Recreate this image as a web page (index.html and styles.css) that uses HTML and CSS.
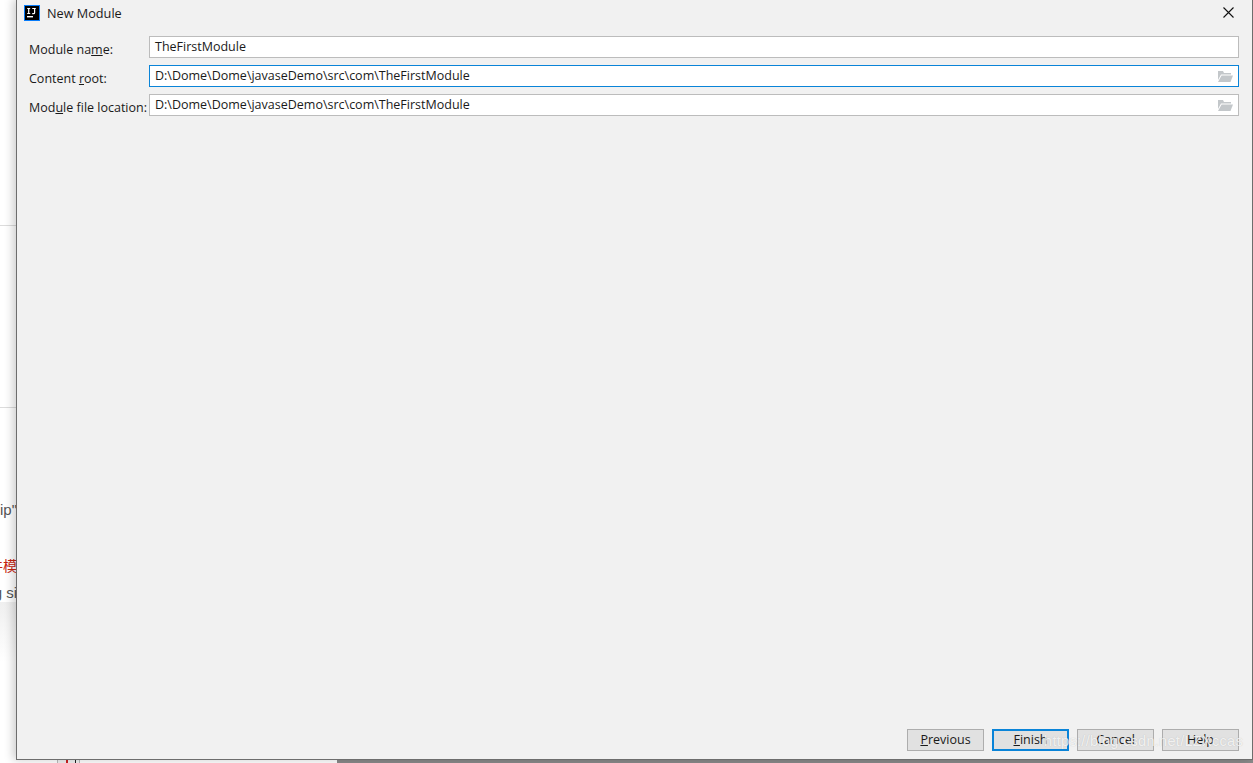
FILE: index.html
```html
<!DOCTYPE html>
<html lang="en">
<head>
<meta charset="utf-8">
<title>New Module</title>
<link rel="stylesheet" href="styles.css">
</head>
<body>
<div class="desktop">
  <div class="page-rule rule-a"></div>
  <div class="page-rule rule-b"></div>
  <div class="page-text text-a"><span>ip"</span></div>
  <div class="page-text text-b"><span>件模</span></div>
  <div class="page-text text-c"><span>g si</span></div>
  <div class="page-end"></div>
  <div class="strip-box"><span class="strip-glyph"></span></div>
  <div class="strip-dark"></div>
</div>
<div class="dialog">
  <header class="titlebar">
    <svg class="app-icon" width="16" height="16" viewBox="0 0 16 16" aria-hidden="true">
      <rect width="16" height="16" fill="#087cfa"/>
      <rect x="1" y="1" width="14" height="14" fill="#000"/>
      <rect x="3" y="11" width="6" height="1.4" fill="#fff"/>
      <path d="M3.200 3.500h3M4.700 3.500v5M3.200 8.500h3M8.200 3.500h3.600M10.600 3.500v4.200q0 .9-1 .9H8.200" stroke="#fff" stroke-width="1.200" fill="none"/>
    </svg>
    <span class="title">New Module</span>
    <svg class="close" width="11" height="11" viewBox="0 0 11 11" aria-hidden="true">
      <path d="M.5.5l10 10M10.500.5l-10 10" stroke="#111" stroke-width="1.100" fill="none"/>
    </svg>
  </header>
  <div class="form">
    <div class="row">
      <label class="label">Module na<u>m</u>e:</label>
      <div class="field"><span class="value">TheFirstModule</span></div>
    </div>
    <div class="row">
      <label class="label">Content <u>r</u>oot:</label>
      <div class="field focused"><span class="value">D:\Dome\Dome\javaseDemo\src\com\TheFirstModule</span>
        <svg class="folder" width="15" height="11" viewBox="0 0 15 11" aria-hidden="true"><path d="M0 0h5l1 2h7v1.500H3L0 9z" fill="#c3c7ca"/><path d="M3.600 4.500H15L12.500 11H0z" fill="#c3c7ca"/></svg>
      </div>
    </div>
    <div class="row">
      <label class="label">Mod<u>u</u>le file location:</label>
      <div class="field"><span class="value">D:\Dome\Dome\javaseDemo\src\com\TheFirstModule</span>
        <svg class="folder" width="15" height="11" viewBox="0 0 15 11" aria-hidden="true"><path d="M0 0h5l1 2h7v1.500H3L0 9z" fill="#c3c7ca"/><path d="M3.600 4.500H15L12.500 11H0z" fill="#c3c7ca"/></svg>
      </div>
    </div>
  </div>
  <footer class="actions">
    <button class="btn"><u>P</u>revious</button>
    <button class="btn default"><u>F</u>inish</button>
    <button class="btn">Cancel</button>
    <button class="btn">Help</button>
  </footer>
</div>
<div class="watermark">https://blog.csdn.net/LZXccas</div>
</body>
</html>
```
FILE: styles.css
```css
* { box-sizing: border-box; }
html, body { margin: 0; height: 100%; }
body {
  width: 1253px;
  height: 763px;
  overflow: hidden;
  background: #fff;
  position: relative;
  font-family: "Open Sans", "Noto Sans CJK SC", sans-serif;
  font-size: 12.5px;
  color: #1a1a1a;
}
.desktop { position: absolute; inset: 0; }
.page-rule { position: absolute; left: 0; width: 16px; height: 1px; background: #dcdcdc; }
.rule-a { top: 225px; }
.rule-b { top: 407px; }
.page-text {
  position: absolute;
  left: 0;
  width: 17px;
  display: flex;
  justify-content: flex-end;
  white-space: nowrap;
  font-family: "Liberation Sans", sans-serif;
  font-size: 15px;
  line-height: 20px;
  color: #555;
}
.page-text span { flex: none; }
.text-a { top: 500px; }
.text-b { top: 555px; color: #c7230e; font-family: "Noto Sans CJK SC", sans-serif; font-size: 14px; }
.text-c { top: 583px; }
.page-end { position: absolute; left: 0; top: 602px; width: 16px; height: 60px; background: linear-gradient(#efefef, #fff); }
.strip-box { position: absolute; left: 57px; top: 759px; width: 23px; height: 4px; background: #f0f0f0; border-left: 1px solid #bbb; border-right: 1px solid #bbb; }
.strip-glyph { position: absolute; left: 8px; top: 1px; width: 10px; height: 3px; border-right: 1px solid #222; border-left: 2px solid #c22; }
.strip-dark { position: absolute; left: 337px; right: 0; top: 759px; height: 4px; background: #8a8a8a; }
.dialog {
  position: absolute;
  left: 16px;
  top: -1px;
  width: 1237px;
  height: 761px;
  background: #f1f1f1;
  border: 1px solid #6d6d6d;
  border-top: 0;
  box-shadow: -3px 0 9px rgba(0, 0, 0, .2);
  display: flex;
  flex-direction: column;
}
.titlebar { height: 28px; padding: 0 18px 0 7px; display: flex; align-items: center; flex: none; }
.app-icon { flex: none; }
.title { margin-left: 7px; font-size: 12.700px; margin-top: -1px; }
.close { margin-left: auto; margin-top: -1px; }
.form { padding: 9px 13px 0 12px; display: flex; flex-direction: column; gap: 7px; flex: none; }
.row { display: flex; height: 22px; }
.label { width: 120px; flex: none; white-space: nowrap; padding-top: 4px; line-height: 20px; }
.field {
  flex: 1;
  height: 22px;
  background: #fff;
  border: 1px solid #bcbcbc;
  padding: 0 5px;
  display: flex;
  align-items: center;
  justify-content: space-between;
  line-height: 18px;
}
.value { margin-top: -1px; }
.focused { border-color: #0a84d8; }
.folder { flex: none; margin-top: 1px; }
.actions { margin-top: auto; padding: 0 13px 8px 0; display: flex; justify-content: flex-end; gap: 8px; }
.btn {
  width: 77px;
  height: 22px;
  padding: 0 0 2px;
  font: inherit;
  color: inherit;
  background: #e1e1e1;
  border: 1px solid #adadad;
}
.default { border: 2px solid #0a84d8; }
.watermark {
  position: absolute;
  right: 10px;
  top: 733px;
  font-family: "Liberation Sans", sans-serif;
  font-size: 14.500px;
  letter-spacing: .3px;
  color: rgba(255, 255, 255, .8);
  text-shadow: 0 0 1px rgba(130, 130, 130, .45);
  pointer-events: none;
}
```
